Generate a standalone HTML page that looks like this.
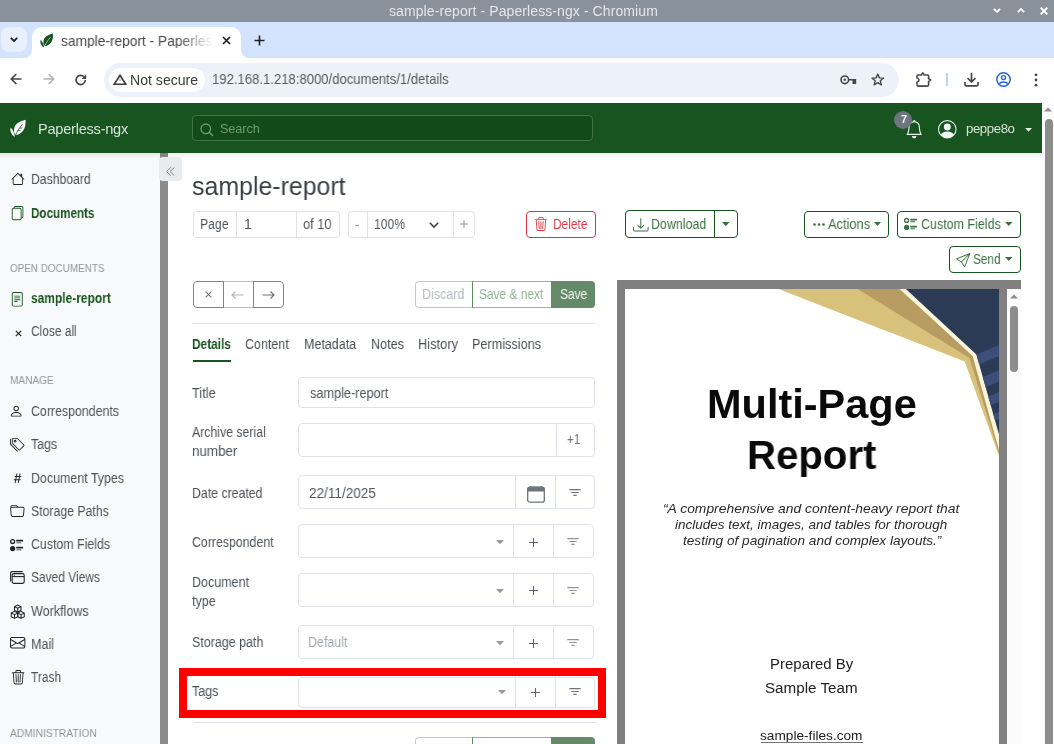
<!DOCTYPE html>
<html><head><meta charset="utf-8">
<style>
*{box-sizing:border-box;margin:0;padding:0}
html,body{width:1054px;height:744px;overflow:hidden;background:#fff;font-family:"Liberation Sans",sans-serif;-webkit-font-smoothing:antialiased;}
.a{position:absolute;}
.t{position:absolute;white-space:nowrap;line-height:1;will-change:transform;}
svg{position:absolute;overflow:visible}
</style></head><body>
<!-- title bar -->
<div class="a" style="left:0;top:0;width:1054px;height:22px;background:#89929b"></div>
<div class="t" style="left:389px;top:4px;font-size:14px;color:#e3e6ea;letter-spacing:0.09px">sample-report - Paperless-ngx - Chromium</div>

<!-- tab strip -->
<div class="a" style="left:0;top:22px;width:1054px;height:36px;background:#d3e3fd"></div>
<!-- toolbar -->
<div class="a" style="left:0;top:58px;width:1054px;height:45px;background:#fff"></div>
<div class="a" style="left:104px;top:63px;width:795px;height:34px;border-radius:17px;background:#edf2fa"></div>


<!-- window controls -->
<svg style="left:993px;top:8px" width="8" height="5" viewBox="0 0 8 5"><path d="M0.8 0.8 L4 4 L7.2 0.8" fill="none" stroke="#fff" stroke-width="1.8"/></svg>
<svg style="left:1017px;top:8px" width="8" height="5" viewBox="0 0 8 5"><path d="M0.8 4.2 L4 1 L7.2 4.2" fill="none" stroke="#fff" stroke-width="1.8"/></svg>
<svg style="left:1040px;top:6.5px" width="8" height="8" viewBox="0 0 8 8"><path d="M0.7 0.7 L7.3 7.3 M7.3 0.7 L0.7 7.3" fill="none" stroke="#fff" stroke-width="1.9"/></svg>

<!-- tab dropdown -->
<div class="a" style="left:1px;top:27px;width:26px;height:25px;border-radius:8px;background:#e9f0fd"></div>
<svg style="left:10px;top:37px" width="8" height="5" viewBox="0 0 8 5"><path d="M0.8 0.8 L4 4 L7.2 0.8" fill="none" stroke="#1f1f1f" stroke-width="1.8"/></svg>
<!-- active tab -->
<div class="a" style="left:32px;top:27px;width:209px;height:31px;border-radius:10px 10px 0 0;background:#fff"></div>
<svg style="left:24px;top:50px" width="8" height="8" viewBox="0 0 8 8"><path d="M8 0 L8 8 L0 8 A8 8 0 0 0 8 0 Z" fill="#fff"/></svg>
<svg style="left:241px;top:50px" width="8" height="8" viewBox="0 0 8 8"><path d="M0 0 L0 8 L8 8 A8 8 0 0 1 0 0 Z" fill="#fff"/></svg>
<svg style="left:40px;top:32.5px" width="13.5" height="15" viewBox="0 0 16 18"><path d="M15.5 0.5 C9 2 4.5 5 4 10 C3.8 12.5 4.5 14.5 5.5 16 C11 15 14.5 11 15.3 6 C15.6 4 15.6 2 15.5 0.5 Z" fill="#17541f"/><path d="M0.6 8.2 C-0.3 11.5 1 15 4.8 17.8 C4.5 14.3 3.2 10.8 0.6 8.2 Z" fill="#17541f"/><path d="M5.5 16 C7 12 9.5 8.5 12.5 5" fill="none" stroke="#fff" stroke-width="0.7"/></svg>
<div class="t" style="left:61px;top:33.8px;font-size:14.4px;color:#474747;width:159px;overflow:hidden;transform:scaleX(0.955);transform-origin:0 0;-webkit-mask-image:linear-gradient(90deg,#000 78%,transparent 100%)">sample-report - Paperless-ngx</div>
<svg style="left:222px;top:36px" width="9" height="9" viewBox="0 0 9 9"><path d="M1 1 L8 8 M8 1 L1 8" fill="none" stroke="#1f1f1f" stroke-width="1.7"/></svg>
<svg style="left:253.5px;top:34.5px" width="11" height="11" viewBox="0 0 11 11"><path d="M5.5 0.5 V10.5 M0.5 5.5 H10.5" fill="none" stroke="#1f1f1f" stroke-width="1.6"/></svg>

<!-- toolbar icons -->
<svg style="left:10px;top:73px" width="12" height="12" viewBox="0 0 12 12"><path d="M11.5 6 H1.5 M6.3 1 L1.3 6 L6.3 11" fill="none" stroke="#474747" stroke-width="1.7"/></svg>
<svg style="left:42.5px;top:73px" width="12" height="12" viewBox="0 0 12 12"><path d="M0.5 6 H10.5 M5.7 1 L10.7 6 L5.7 11" fill="none" stroke="#b3b3b3" stroke-width="1.7"/></svg>
<svg style="left:75px;top:73.5px" width="12" height="12" viewBox="0 0 12 12"><path d="M10.3 6 A4.6 4.6 0 1 1 8.9 2.6" fill="none" stroke="#474747" stroke-width="1.7"/><path d="M11.2 0.3 V5 H6.5 Z" fill="#474747"/></svg>
<div class="a" style="left:108.5px;top:68px;width:96.5px;height:24px;border-radius:12px;background:#fff"></div>
<svg style="left:112.5px;top:74px" width="14" height="11" viewBox="0 0 14 11"><path d="M7 1.2 L12.8 10.2 H1.2 Z" fill="none" stroke="#3c3c3c" stroke-width="1.6" stroke-linejoin="miter"/><path d="M7 4.5 V7.3" stroke="#888" stroke-width="0.8"/></svg>
<div class="t" style="left:129.5px;top:72.5px;font-size:14.1px;color:#3a3a3a">Not secure</div>
<div class="t" style="left:212.3px;top:73.1px;font-size:13.9px;color:#5a5a5a;transform:scaleX(0.943);transform-origin:0 0">192.168.1.218:8000/documents/1/details</div>
<!-- key -->
<svg style="left:840px;top:74.5px" width="17" height="10" viewBox="0 0 17 10"><circle cx="4.8" cy="4.8" r="3.8" fill="none" stroke="#474747" stroke-width="1.6"/><circle cx="4.8" cy="4.8" r="1.2" fill="#474747"/><path d="M8.6 3.9 H16.2 V9 H12.5 V5.6 H8.6 Z" fill="#474747"/></svg>
<!-- star -->
<svg style="left:870.5px;top:72.5px" width="13.5" height="13" viewBox="0 0 16 16"><path d="M8 1.3 L10 6 L15 6.4 L11.2 9.6 L12.4 14.6 L8 11.9 L3.6 14.6 L4.8 9.6 L1 6.4 L6 6 Z" fill="none" stroke="#474747" stroke-width="1.7" stroke-linejoin="round"/></svg>
<!-- extension -->
<svg style="left:915.5px;top:71.5px" width="16" height="15" viewBox="0 0 16 15"><path d="M2 3 H5.3 L6.8 0.9 L8.3 3 H11.6 Q12.6 3 12.6 4 V6.7 L14.6 8 L12.6 9.3 V13.1 Q12.6 14.1 11.6 14.1 H2 Q1 14.1 1 13.1 V10.2 Q3 9.6 3 8 Q3 6.4 1 5.8 V4 Q1 3 2 3 Z" fill="none" stroke="#474747" stroke-width="1.6" stroke-linejoin="round"/></svg>
<div class="a" style="left:946px;top:73px;width:1.5px;height:13px;background:#c2d3f0"></div>
<!-- download -->
<svg style="left:963.5px;top:71.5px" width="15" height="15" viewBox="0 0 15 15"><path d="M7.5 0.8 V10 M3.6 6.2 L7.5 10.1 L11.4 6.2 M1 10 V12.6 Q1 13.8 2.2 13.8 H12.8 Q14 13.8 14 12.6 V10" fill="none" stroke="#474747" stroke-width="1.7"/></svg>
<!-- profile -->
<svg style="left:995.5px;top:71.8px" width="15" height="15" viewBox="0 0 15 15"><circle cx="7.5" cy="7.5" r="6.7" fill="none" stroke="#2266d8" stroke-width="1.5"/><circle cx="7.5" cy="5.6" r="2" fill="none" stroke="#2266d8" stroke-width="1.4"/><path d="M3.2 11.9 C4.5 9.4 10.5 9.4 11.8 11.9" fill="none" stroke="#2266d8" stroke-width="1.4"/></svg>
<!-- menu -->
<svg style="left:1034px;top:72.5px" width="4" height="14" viewBox="0 0 4 14"><circle cx="2" cy="1.8" r="1.4" fill="#474747"/><circle cx="2" cy="7" r="1.4" fill="#474747"/><circle cx="2" cy="12.2" r="1.4" fill="#474747"/></svg>

<!-- navbar -->
<div class="a" style="left:0;top:103px;width:1042px;height:50px;background:#17541f"></div>
<div class="a" style="left:192px;top:115px;width:401px;height:26px;border-radius:4px;background:#134a1a;border:1px solid #457349"></div>


<svg style="left:9.5px;top:119px" width="16" height="18.5" viewBox="0 0 16 18"><path d="M15.5 0.5 C9 2 4.5 5 4 10 C3.8 12.5 4.5 14.5 5.5 16 C11 15 14.5 11 15.3 6 C15.6 4 15.6 2 15.5 0.5 Z" fill="#fff"/><path d="M0.6 8.2 C-0.3 11.5 1 15 4.8 17.8 C4.5 14.3 3.2 10.8 0.6 8.2 Z" fill="#fff"/><path d="M5.5 16 C7 12 9.5 8.5 12.5 5 M8 11.5 L10.5 11.3 M9.8 9 L12.5 8.6" fill="none" stroke="#17541f" stroke-width="0.8"/></svg>
<div class="t" style="left:38.2px;top:121.5px;font-size:14.6px;color:#d7e2d8;letter-spacing:-0.25px">Paperless-ngx</div>
<svg style="left:200px;top:122.5px" width="14" height="14" viewBox="0 0 14 14"><circle cx="5.8" cy="5.8" r="4.8" fill="none" stroke="#6f9a74" stroke-width="1.3"/><path d="M9.2 9.2 L13 13" stroke="#6f9a74" stroke-width="1.4"/></svg>
<div class="t" style="left:220.3px;top:123px;font-size:12.7px;color:#6f9a74;letter-spacing:-0.1px">Search</div>
<!-- badge+bell -->
<svg style="left:905.4px;top:120px" width="18.4" height="18.4" viewBox="0 0 16 16"><path d="M8 16a2 2 0 0 0 2-2H6a2 2 0 0 0 2 2M8 1.918l-.797.161A4 4 0 0 0 4 6c0 .628-.134 2.197-.459 3.742-.16.767-.376 1.566-.663 2.258h10.244c-.287-.692-.502-1.49-.663-2.258C12.134 8.197 12 6.628 12 6a4 4 0 0 0-3.203-3.92zM14.22 12c.223.447.481.801.78 1H1c.299-.199.557-.553.78-1C2.68 10.2 3 6.88 3 6c0-2.42 1.72-4.44 4.005-4.901a1 1 0 1 1 1.99 0A5 5 0 0 1 13 6c0 .88.32 4.2 1.22 6" fill="#e6ede6"/></svg>
<div class="a" style="left:894.2px;top:110.7px;width:18.2px;height:18.2px;border-radius:50%;background:#6c757d"></div>
<div class="t" style="left:894.5px;top:114.2px;width:18px;text-align:center;font-size:11px;font-weight:bold;color:#f4f4f4">7</div>
<svg style="left:938.3px;top:120px" width="18.6" height="18.6" viewBox="0 0 16 16"><path d="M11 6a3 3 0 1 1-6 0 3 3 0 0 1 6 0" fill="#f0f4f0"/><path fill-rule="evenodd" d="M0 8a8 8 0 1 1 16 0A8 8 0 0 1 0 8m8-7a7 7 0 0 0-5.468 11.37C3.242 11.226 4.805 10 8 10s4.757 1.225 5.468 2.37A7 7 0 0 0 8 1" fill="#f0f4f0"/></svg>
<div class="t" style="left:966px;top:121.5px;font-size:13.2px;color:#d7e2d8;letter-spacing:-0.4px">peppe8o</div>
<svg style="left:1024.5px;top:127.5px" width="7" height="4" viewBox="0 0 7 4"><path d="M0 0 H7 L3.5 3.8 Z" fill="#e6ede6"/></svg>

<!-- page scrollbar -->
<div class="a" style="left:1042px;top:103px;width:12px;height:641px;background:#fcfcfc"></div>
<div class="a" style="left:1045px;top:119px;width:8px;height:640px;border-radius:4px;background:#8c8c8c"></div>

<!-- scrollbar up arrow -->
<svg style="left:1044px;top:107px" width="8" height="5" viewBox="0 0 8 5"><path d="M0 4.5 L4 0.5 L8 4.5 Z" fill="#8c8c8c"/></svg>


<div class="a" style="left:0px;top:153px;width:160px;height:591px;background:#f8f9fa;"></div>
<div class="a" style="left:160px;top:153px;width:8px;height:591px;background:#8b8b8b;"></div>
<div class="a" style="left:0px;top:153px;width:1042px;height:6px;background:transparent;background:linear-gradient(rgba(0,0,0,0.07),rgba(0,0,0,0))"></div>
<div class="a" style="left:159px;top:157px;width:23px;height:24px;background:#e9ecef;border-radius:4px"></div>
<svg style="left:166.2px;top:167px" width="9" height="9" viewBox="0 0 9 9"><path d="M4.8 0.4 L0.6 4.5 L4.8 8.6 M8.4 0.4 L4.2 4.5 L8.4 8.6" fill="none" stroke="#6c757d" stroke-width="0.9"/></svg>
<div class="t" style="left:31.30px;top:171.80px;font-size:14px;color:#4d5257;transform:scaleX(0.8706);transform-origin:0 0;">Dashboard</div>
<div class="t" style="left:31.30px;top:205.50px;font-size:14px;color:#17541f;font-weight:bold;transform:scaleX(0.8317);transform-origin:0 0;">Documents</div>
<div class="t" style="left:31.30px;top:291.00px;font-size:14px;color:#17541f;font-weight:bold;transform:scaleX(0.8546);transform-origin:0 0;">sample-report</div>
<div class="t" style="left:31.30px;top:324.30px;font-size:14px;color:#4d5257;transform:scaleX(0.8512);transform-origin:0 0;">Close all</div>
<div class="t" style="left:31.30px;top:404.20px;font-size:14px;color:#4d5257;transform:scaleX(0.8834);transform-origin:0 0;">Correspondents</div>
<div class="t" style="left:31.30px;top:436.80px;font-size:14px;color:#4d5257;transform:scaleX(0.8835);transform-origin:0 0;">Tags</div>
<div class="t" style="left:31.30px;top:470.50px;font-size:14px;color:#4d5257;transform:scaleX(0.8875);transform-origin:0 0;">Document Types</div>
<div class="t" style="left:31.30px;top:503.70px;font-size:14px;color:#4d5257;transform:scaleX(0.8765);transform-origin:0 0;">Storage Paths</div>
<div class="t" style="left:31.30px;top:536.90px;font-size:14px;color:#4d5257;transform:scaleX(0.8831);transform-origin:0 0;">Custom Fields</div>
<div class="t" style="left:31.30px;top:570.10px;font-size:14px;color:#4d5257;transform:scaleX(0.8549);transform-origin:0 0;">Saved Views</div>
<div class="t" style="left:31.30px;top:603.60px;font-size:14px;color:#4d5257;transform:scaleX(0.8969);transform-origin:0 0;">Workflows</div>
<div class="t" style="left:31.30px;top:637.10px;font-size:14px;color:#4d5257;transform:scaleX(0.8953);transform-origin:0 0;">Mail</div>
<div class="t" style="left:31.30px;top:669.80px;font-size:14px;color:#4d5257;transform:scaleX(0.8532);transform-origin:0 0;">Trash</div>
<div class="t" style="left:9.80px;top:263.29px;font-size:10.6px;color:#8f959b;transform:scaleX(0.9330);transform-origin:0 0;">OPEN DOCUMENTS</div>
<div class="t" style="left:10.20px;top:375.19px;font-size:10.6px;color:#8f959b;transform:scaleX(0.9532);transform-origin:0 0;">MANAGE</div>
<div class="t" style="left:9.70px;top:728.39px;font-size:10.6px;color:#8f959b;transform:scaleX(0.9668);transform-origin:0 0;">ADMINISTRATION</div>
<svg style="left:10.7px;top:171.9px" width="13.76" height="13.76" viewBox="0 0 16 16"><path d="M8.707 1.5a1 1 0 0 0-1.414 0L.646 8.146a.5.5 0 0 0 .708.708L2 8.207V13.5A1.5 1.5 0 0 0 3.5 15h9a1.5 1.5 0 0 0 1.5-1.5V8.207l.646.647a.5.5 0 0 0 .708-.708L13 5.793V2.5a.5.5 0 0 0-.5-.5h-1a.5.5 0 0 0-.5.5v1.293zM13 7.207V13.5a.5.5 0 0 1-.5.5h-9a.5.5 0 0 1-.5-.5V7.207l5-5z" fill="#212529"/></svg>
<svg style="left:10.3px;top:205.7px" width="14.24" height="14.24" viewBox="0 0 16 16"><path d="M13 0H6a2 2 0 0 0-2 2 2 2 0 0 0-2 2v10a2 2 0 0 0 2 2h7a2 2 0 0 0 2-2 2 2 0 0 0 2-2V2a2 2 0 0 0-2-2m0 13V4a2 2 0 0 0-2-2H5a1 1 0 0 1 1-1h7a1 1 0 0 1 1 1v10a1 1 0 0 1-1 1M3 4a1 1 0 0 1 1-1h7a1 1 0 0 1 1 1v10a1 1 0 0 1-1 1H4a1 1 0 0 1-1-1z" fill="#17541f"/></svg>
<svg style="left:9.7px;top:292px" width="14.56" height="14.56" viewBox="0 0 16 16"><path d="M5 4a.5.5 0 0 0 0 1h6a.5.5 0 0 0 0-1zm-.5 2.5A.5.5 0 0 1 5 6h6a.5.5 0 0 1 0 1H5a.5.5 0 0 1-.5-.5M5 8a.5.5 0 0 0 0 1h6a.5.5 0 0 0 0-1zm0 2a.5.5 0 0 0 0 1h3a.5.5 0 0 0 0-1zM2 2a2 2 0 0 1 2-2h8a2 2 0 0 1 2 2v12a2 2 0 0 1-2 2H4a2 2 0 0 1-2-2zm10-1H4a1 1 0 0 0-1 1v12a1 1 0 0 0 1 1h8a1 1 0 0 0 1-1V2a1 1 0 0 0-1-1" fill="#17541f"/></svg>
<svg style="left:14.5px;top:329.5px" width="7" height="7" viewBox="0 0 7 7"><path d="M0.8 0.8 L6.2 6.2 M6.2 0.8 L0.8 6.2" stroke="#212529" stroke-width="1.2"/></svg>
<svg style="left:9.2px;top:403.9px" width="14.4" height="14.4" viewBox="0 0 16 16"><path d="M8 8a3 3 0 1 0 0-6 3 3 0 0 0 0 6m2-3a2 2 0 1 1-4 0 2 2 0 0 1 4 0m4 8c0 1-1 1-1 1H3s-1 0-1-1 1-4 6-4 6 3 6 4m-1-.004c-.001-.246-.154-.986-.832-1.664C11.516 10.68 10.289 10 8 10s-3.516.68-4.168 1.332c-.678.678-.83 1.418-.832 1.664z" fill="#212529"/></svg>
<svg style="left:10px;top:437px" width="14.88" height="14.88" viewBox="0 0 16 16"><path d="M3 2v4.586l7 7L14.586 9l-7-7zM2 2a1 1 0 0 1 1-1h4.586a1 1 0 0 1 .707.293l7 7a1 1 0 0 1 0 1.414l-4.586 4.586a1 1 0 0 1-1.414 0l-7-7A1 1 0 0 1 2 6.586zM5.5 5a.5.5 0 1 1 0-1 .5.5 0 0 1 0 1m0 1a1.5 1.5 0 1 0 0-3 1.5 1.5 0 0 0 0 3M1 7.086a1 1 0 0 0 .293.707L8.75 15.25l-.043.043a1 1 0 0 1-1.414 0l-7-7A1 1 0 0 1 0 7.586V3a1 1 0 0 1 1-1z" fill="#212529"/></svg>
<svg style="left:9.8px;top:470.5px" width="14.72" height="14.72" viewBox="0 0 16 16"><path d="M8.39 12.648a1 1 0 0 0-.015.18c0 .305.21.508.5.508.266 0 .492-.172.555-.477l.554-2.703h1.204c.421 0 .617-.234.617-.547 0-.312-.188-.53-.617-.53h-.985l.516-2.524h1.265c.43 0 .618-.227.618-.547 0-.313-.188-.524-.618-.524h-1.046l.476-2.304a1 1 0 0 0 .016-.164.51.51 0 0 0-.516-.516.54.54 0 0 0-.539.43l-.523 2.554H7.617l.477-2.304c.008-.04.015-.118.015-.164a.51.51 0 0 0-.523-.516.54.54 0 0 0-.531.43L6.53 5.484H5.414c-.43 0-.617.22-.617.532s.187.539.617.539h.906l-.515 2.523H4.609c-.421 0-.609.219-.609.531s.188.547.61.547h.976l-.516 2.492c-.008.04-.015.125-.015.18 0 .305.21.508.5.508.265 0 .492-.172.554-.477l.555-2.703h2.242zm-1-6.109h2.266l-.515 2.563H6.859l.532-2.563z" fill="#212529"/></svg>
<svg style="left:10.2px;top:503.6px" width="14.72" height="14.72" viewBox="0 0 16 16"><path d="M.54 3.87.5 3a2 2 0 0 1 2-2h3.672a2 2 0 0 1 1.414.586l.828.828A2 2 0 0 0 9.828 3h3.982a2 2 0 0 1 1.992 2.181l-.637 7A2 2 0 0 1 13.174 14H2.826a2 2 0 0 1-1.991-1.819l-.637-7a2 2 0 0 1 .342-1.31zM2.19 4a1 1 0 0 0-.996 1.09l.637 7a1 1 0 0 0 .995.91h10.348a1 1 0 0 0 .995-.91l.637-7A1 1 0 0 0 13.81 4zm4.69-1.707A1 1 0 0 0 6.172 2H2.5a1 1 0 0 0-1 .981l.006.139q.323-.119.684-.12h5.396z" fill="#212529"/></svg>
<svg style="left:10.1px;top:537.5px" width="14.08" height="14.08" viewBox="0 0 16 16"><path d="M7 2.5a.5.5 0 0 1 .5-.5h7a.5.5 0 0 1 .5.5v1a.5.5 0 0 1-.5.5h-7a.5.5 0 0 1-.5-.5zM0 12a3 3 0 1 1 6 0 3 3 0 0 1-6 0m7-1.5a.5.5 0 0 1 .5-.5h7a.5.5 0 0 1 .5.5v1a.5.5 0 0 1-.5.5h-7a.5.5 0 0 1-.5-.5zm0-5a.5.5 0 0 1 .5-.5h5a.5.5 0 0 1 0 1h-5a.5.5 0 0 1-.5-.5m0 8a.5.5 0 0 1 .5-.5h5a.5.5 0 0 1 0 1h-5a.5.5 0 0 1-.5-.5M3 1a3 3 0 1 0 0 6 3 3 0 0 0 0-6m0 4.5a1.5 1.5 0 1 1 0-3 1.5 1.5 0 0 1 0 3" fill="#212529"/></svg>
<svg style="left:10px;top:571px" width="15" height="13" viewBox="0 0 15 13"><rect x="2.2" y="2.6" width="12" height="9.8" rx="1.6" fill="none" stroke="#212529" stroke-width="1.1"/><path d="M2.2 5.6 H14.2" stroke="#212529" stroke-width="1.1"/><path d="M0.6 10.6 V2.2 Q0.6 0.6 2.2 0.6 H12.6" fill="none" stroke="#212529" stroke-width="1.1"/><path d="M3.8 4.1 H5" stroke="#212529" stroke-width="0.9"/></svg>
<svg style="left:10px;top:603.5px" width="15.5" height="15.5" viewBox="0 0 15.5 15.5"><g fill="none" stroke="#212529" stroke-width="1.05" stroke-linejoin="round"><path d="M7.75 1 L11 2.6 V6.4 L7.75 8 L4.5 6.4 V2.6 Z M4.5 2.6 L7.75 4.2 L11 2.6 M7.75 4.2 V8"/><path d="M4.5 7.4 L7.75 9 V12.8 L4.5 14.4 L1.25 12.8 V9 Z M1.25 9 L4.5 10.6 L7.75 9 M4.5 10.6 V14.4"/><path d="M11 7.4 L14.25 9 V12.8 L11 14.4 L7.75 12.8 V9 Z M7.75 9 L11 10.6 L14.25 9 M11 10.6 V14.4"/></g></svg>
<svg style="left:9.9px;top:635px" width="15.36" height="15.36" viewBox="0 0 16 16"><path d="M0 4a2 2 0 0 1 2-2h12a2 2 0 0 1 2 2v8a2 2 0 0 1-2 2H2a2 2 0 0 1-2-2zm2-1a1 1 0 0 0-1 1v.217l7 4.2 7-4.2V4a1 1 0 0 0-1-1zm13 2.383-4.708 2.825L15 11.105zm-.034 6.876-5.64-3.471L8 9.583l-1.326-.795-5.64 3.47A1 1 0 0 0 2 13h12a1 1 0 0 0 .966-.741M1 11.105l4.708-2.897L1 5.383z" fill="#212529"/></svg>
<svg style="left:11.3px;top:669.6px" width="14.4" height="14.4" viewBox="0 0 16 16"><path d="M6.5 1h3a.5.5 0 0 1 .5.5v1H6v-1a.5.5 0 0 1 .5-.5M11 2.5v-1A1.5 1.5 0 0 0 9.5 0h-3A1.5 1.5 0 0 0 5 1.5v1H1.5a.5.5 0 0 0 0 1h.538l.853 10.66A2 2 0 0 0 4.885 16h6.23a2 2 0 0 0 1.994-1.84l.853-10.66h.538a.5.5 0 0 0 0-1zm1.958 1-.846 10.58a1 1 0 0 1-.997.92h-6.23a1 1 0 0 1-.997-.92L3.042 3.5zm-7.487 1a.5.5 0 0 1 .528.47l.5 8.5a.5.5 0 0 1-.998.06L5 5.03a.5.5 0 0 1 .47-.53Zm5.058 0a.5.5 0 0 1 .47.53l-.5 8.5a.5.5 0 1 1-.998-.06l.5-8.5a.5.5 0 0 1 .528-.47M8 4.5a.5.5 0 0 1 .5.5v8.5a.5.5 0 0 1-1 0V5a.5.5 0 0 1 .5-.5" fill="#212529"/></svg>
<div class="a" style="left:617px;top:280px;width:404px;height:464px;background:#808080;"></div>
<div class="a" style="left:625px;top:289px;width:374px;height:455px;background:#fff;"></div>
<div class="a" style="left:1007px;top:289px;width:14px;height:455px;background:#fbfbfb;"></div>
<div class="a" style="left:1010px;top:306px;width:8px;height:66px;background:#8c8c8c;border-radius:4px"></div>
<svg style="left:1010px;top:293.5px" width="8" height="5" viewBox="0 0 8 5"><path d="M0 4.5 L4 0.5 L8 4.5 Z" fill="#8c8c8c"/></svg>
<svg style="left:0;top:0" width="1054" height="744" viewBox="0 0 1054 744">
<defs><clipPath id="nv"><polygon points="905.9,289 999,289 999,434.5 976.4,354.5"/></clipPath></defs>
<polygon points="778.5,289 999,289 999,456 964.7,361.4" fill="#d8c17a"/>
<polygon points="857.5,289 999,289 999,453.5 969.5,358" fill="#b89d62"/>
<polygon points="899.5,289 999,289 999,450 972.6,356" fill="#f9f4da"/>
<polygon points="905.9,289 999,289 999,434.5 976.4,354.5" fill="#2b3a55"/>
<g clip-path="url(#nv)" fill="#3c4f78">
<polygon points="999,344.9 999,356 940,381.4 940,370.3"/>
<polygon points="999,370.2 999,381.6 940,407 940,395.6"/>
<polygon points="999,392 999,401.7 940,427.1 940,417.4"/>
<polygon points="999,412 999,419 940,444.4 940,437.4"/>
</g>
</svg>
<div class="t" style="left:706.70px;top:384.40px;font-size:40.7px;color:#0a0a0a;font-weight:bold;transform:scaleX(1.0197);transform-origin:0 0;">Multi-Page</div>
<div class="t" style="left:747.00px;top:434.80px;font-size:40.7px;color:#0a0a0a;font-weight:bold;transform:scaleX(0.9874);transform-origin:0 0;">Report</div>
<div class="t" style="left:663.30px;top:501.95px;font-size:13px;color:#2a2a2a;font-style:italic;transform:scaleX(1.0669);transform-origin:0 0;">“A comprehensive and content-heavy report that</div>
<div class="t" style="left:675.30px;top:518.35px;font-size:13px;color:#2a2a2a;font-style:italic;transform:scaleX(1.0380);transform-origin:0 0;">includes text, images, and tables for thorough</div>
<div class="t" style="left:682.70px;top:534.15px;font-size:13px;color:#2a2a2a;font-style:italic;transform:scaleX(1.0486);transform-origin:0 0;">testing of pagination and complex layouts.”</div>
<div class="t" style="left:769.90px;top:657.00px;font-size:14.7px;color:#222;transform:scaleX(1.0204);transform-origin:0 0;">Prepared By</div>
<div class="t" style="left:765.20px;top:681.21px;font-size:14.7px;color:#222;transform:scaleX(1.0335);transform-origin:0 0;">Sample Team</div>
<div class="t" style="left:759.90px;top:730.09px;font-size:12.6px;color:#222;transform:scaleX(1.0847);transform-origin:0 0;">sample-files.com</div>
<div class="a" style="left:760.6px;top:742px;width:102.5px;height:1px;background:#777;"></div>
<div class="t" style="left:192.00px;top:174.05px;font-size:25px;color:#3a3f44;transform:scaleX(0.9958);transform-origin:0 0;">sample-report</div>
<div class="a" style="left:193px;top:211px;width:147px;height:27px;border:1px solid #dee2e6;border-radius:4px"></div>
<div class="a" style="left:236px;top:211px;width:1px;height:27px;background:#dee2e6;"></div>
<div class="a" style="left:296px;top:211px;width:1px;height:27px;background:#dee2e6;"></div>
<div class="t" style="left:199.60px;top:216.80px;font-size:14px;color:#50565b;transform:scaleX(0.8749);transform-origin:0 0;">Page</div>
<div class="t" style="left:243.80px;top:216.80px;font-size:14px;color:#50565b;">1</div>
<div class="t" style="left:303.30px;top:216.80px;font-size:14px;color:#50565b;transform:scaleX(0.9181);transform-origin:0 0;">of 10</div>
<div class="a" style="left:347.5px;top:210.5px;width:127.5px;height:27.5px;border:1px solid #dee2e6;border-radius:4px"></div>
<div class="a" style="left:366.5px;top:211px;width:1px;height:27px;background:#dee2e6;"></div>
<div class="a" style="left:452.5px;top:211px;width:1px;height:27px;background:#dee2e6;"></div>
<div class="a" style="left:354.5px;top:224.5px;width:4px;height:1px;background:#9aa0a6;"></div>
<div class="t" style="left:374.10px;top:216.60px;font-size:14px;color:#50565b;transform:scaleX(0.8705);transform-origin:0 0;">100%</div>
<svg style="left:429px;top:222px" width="10" height="6" viewBox="0 0 10 6"><path d="M0.8 0.8 L5 5 L9.2 0.8" fill="none" stroke="#3d4246" stroke-width="1.6"/></svg>
<svg style="left:459.5px;top:219.5px" width="8" height="8" viewBox="0 0 8 8"><path d="M4 0 V8 M0 4 H8" stroke="#8a9096" stroke-width="1"/></svg>
<div class="a" style="left:526px;top:210.5px;width:70px;height:27.5px;border:1px solid #dc3545;border-radius:4px"></div>
<svg style="left:534.4px;top:217.3px" width="13.92" height="13.92" viewBox="0 0 16 16"><path d="M6.5 1h3a.5.5 0 0 1 .5.5v1H6v-1a.5.5 0 0 1 .5-.5M11 2.5v-1A1.5 1.5 0 0 0 9.5 0h-3A1.5 1.5 0 0 0 5 1.5v1H1.5a.5.5 0 0 0 0 1h.538l.853 10.66A2 2 0 0 0 4.885 16h6.23a2 2 0 0 0 1.994-1.84l.853-10.66h.538a.5.5 0 0 0 0-1zm1.958 1-.846 10.58a1 1 0 0 1-.997.92h-6.23a1 1 0 0 1-.997-.92L3.042 3.5zm-7.487 1a.5.5 0 0 1 .528.47l.5 8.5a.5.5 0 0 1-.998.06L5 5.03a.5.5 0 0 1 .47-.53Zm5.058 0a.5.5 0 0 1 .47.53l-.5 8.5a.5.5 0 1 1-.998-.06l.5-8.5a.5.5 0 0 1 .528-.47M8 4.5a.5.5 0 0 1 .5.5v8.5a.5.5 0 0 1-1 0V5a.5.5 0 0 1 .5-.5" fill="#dc3545"/></svg>
<div class="t" style="left:552.50px;top:216.90px;font-size:14px;color:#dc3545;transform:scaleX(0.8502);transform-origin:0 0;">Delete</div>
<div class="a" style="left:625px;top:210px;width:113px;height:28px;border:1px solid #17541f;border-radius:4px"></div>
<div class="a" style="left:714px;top:210px;width:1px;height:28px;background:#17541f;"></div>
<svg style="left:633px;top:217.1px" width="15.6" height="15.6" viewBox="0 0 16 16"><path d="M.5 9.9a.5.5 0 0 1 .5.5v2.5a1 1 0 0 0 1 1h12a1 1 0 0 0 1-1v-2.5a.5.5 0 0 1 1 0v2.5a2 2 0 0 1-2 2H2a2 2 0 0 1-2-2v-2.5a.5.5 0 0 1 .5-.5M7.646 11.854a.5.5 0 0 0 .708 0l3-3a.5.5 0 0 0-.708-.708L8.5 10.293V1.5a.5.5 0 0 0-1 0v8.793L5.354 8.146a.5.5 0 1 0-.708.708z" fill="#3a7041"/></svg>
<div class="t" style="left:651.30px;top:217.00px;font-size:14px;color:#3a7041;transform:scaleX(0.8870);transform-origin:0 0;">Download</div>
<svg style="left:722px;top:222px" width="7.5" height="4.5" viewBox="0 0 7.5 4.5"><path d="M0 0 H7.5 L3.75 4.3 Z" fill="#3a7041"/></svg>
<div class="a" style="left:803.5px;top:210.5px;width:85px;height:27.5px;border:1px solid #17541f;border-radius:4px"></div>
<svg style="left:812.5px;top:223px" width="12" height="3" viewBox="0 0 12 3"><circle cx="1.5" cy="1.5" r="1.3" fill="#3a7041"/><circle cx="6" cy="1.5" r="1.3" fill="#3a7041"/><circle cx="10.5" cy="1.5" r="1.3" fill="#3a7041"/></svg>
<div class="t" style="left:828.20px;top:217.00px;font-size:14px;color:#3a7041;transform:scaleX(0.9190);transform-origin:0 0;">Actions</div>
<svg style="left:874px;top:222px" width="7" height="4.3" viewBox="0 0 7 4.3"><path d="M0 0 H7 L3.5 4 Z" fill="#3a7041"/></svg>
<div class="a" style="left:896.5px;top:210.5px;width:124px;height:27.5px;border:1px solid #17541f;border-radius:4px"></div>
<svg style="left:904px;top:216.5px" width="13.92" height="13.92" viewBox="0 0 16 16"><path d="M7 2.5a.5.5 0 0 1 .5-.5h7a.5.5 0 0 1 .5.5v1a.5.5 0 0 1-.5.5h-7a.5.5 0 0 1-.5-.5zM0 12a3 3 0 1 1 6 0 3 3 0 0 1-6 0m7-1.5a.5.5 0 0 1 .5-.5h7a.5.5 0 0 1 .5.5v1a.5.5 0 0 1-.5.5h-7a.5.5 0 0 1-.5-.5zm0-5a.5.5 0 0 1 .5-.5h5a.5.5 0 0 1 0 1h-5a.5.5 0 0 1-.5-.5m0 8a.5.5 0 0 1 .5-.5h5a.5.5 0 0 1 0 1h-5a.5.5 0 0 1-.5-.5M3 1a3 3 0 1 0 0 6 3 3 0 0 0 0-6m0 4.5a1.5 1.5 0 1 1 0-3 1.5 1.5 0 0 1 0 3" fill="#3a7041"/></svg>
<div class="t" style="left:921.30px;top:217.00px;font-size:14px;color:#3a7041;transform:scaleX(0.8920);transform-origin:0 0;">Custom Fields</div>
<svg style="left:1005px;top:222px" width="7.5" height="4.3" viewBox="0 0 7.5 4.3"><path d="M0 0 H7.5 L3.75 4 Z" fill="#3a7041"/></svg>
<div class="a" style="left:948.5px;top:245.5px;width:72px;height:27.5px;border:1px solid #17541f;border-radius:4px"></div>
<svg style="left:956.3px;top:252.6px" width="14.4" height="14.4" viewBox="0 0 16 16"><path d="M15.854.146a.5.5 0 0 1 .11.54l-5.819 14.547a.75.75 0 0 1-1.329.124l-3.178-4.995L.643 7.184a.75.75 0 0 1 .124-1.33L15.314.037a.5.5 0 0 1 .54.11ZM6.636 10.07l2.761 4.338L14.13 2.576zm6.787-8.201L1.591 6.602l4.339 2.76z" fill="#3a7041"/></svg>
<div class="t" style="left:973.30px;top:252.00px;font-size:14px;color:#3a7041;transform:scaleX(0.8443);transform-origin:0 0;">Send</div>
<svg style="left:1005px;top:257px" width="7.5" height="4.3" viewBox="0 0 7.5 4.3"><path d="M0 0 H7.5 L3.75 4 Z" fill="#3a7041"/></svg>
<div class="a" style="left:192.5px;top:280.5px;width:91.5px;height:27.5px;border:1px solid #7d848a;border-radius:4px"></div>
<div class="a" style="left:222.5px;top:280.5px;width:1px;height:27.5px;background:#7d848a;"></div>
<div class="a" style="left:253px;top:280.5px;width:1px;height:27.5px;background:#7d848a;"></div>
<div class="a" style="left:223.5px;top:280.5px;width:29.5px;height:1px;background:#b9bdc1;"></div>
<div class="a" style="left:223.5px;top:307px;width:29.5px;height:1px;background:#b9bdc1;"></div>
<svg style="left:204.5px;top:290.5px" width="7" height="7" viewBox="0 0 7 7"><path d="M0.6 0.6 L6.4 6.4 M6.4 0.6 L0.6 6.4" stroke="#6c757d" stroke-width="1.1"/></svg>
<svg style="left:231px;top:290.5px" width="14" height="8" viewBox="0 0 14 8"><path d="M12.5 4 H1 M4.5 0.5 L1 4 L4.5 7.5" fill="none" stroke="#b0b5ba" stroke-width="1.1"/></svg>
<svg style="left:262px;top:290.5px" width="14" height="8" viewBox="0 0 14 8"><path d="M0.5 4 H12 M8.5 0.5 L12 4 L8.5 7.5" fill="none" stroke="#6c757d" stroke-width="1.2"/></svg>
<div class="a" style="left:414.5px;top:280.5px;width:58px;height:27.5px;border:1px solid #c4c8cc;border-right:none;border-radius:4px 0 0 4px"></div>
<div class="a" style="left:472px;top:280.5px;width:80px;height:27.5px;border:1px solid #93b597;border-left:1px solid #5d8a62;"></div>
<div class="a" style="left:551px;top:280.5px;width:44px;height:27.5px;background:#658a6a;border-radius:0 4px 4px 0"></div>
<div class="t" style="left:421.80px;top:287.10px;font-size:14px;color:#b5babe;transform:scaleX(0.8913);transform-origin:0 0;">Discard</div>
<div class="t" style="left:479.30px;top:287.10px;font-size:14px;color:#8fb093;transform:scaleX(0.8521);transform-origin:0 0;">Save &amp; next</div>
<div class="t" style="left:559.90px;top:287.10px;font-size:14px;color:#f4f7f4;transform:scaleX(0.8553);transform-origin:0 0;">Save</div>
<div class="a" style="left:192px;top:323px;width:403px;height:1px;background:#dee2e6;"></div>
<div class="t" style="left:191.90px;top:336.80px;font-size:14px;color:#17541f;font-weight:bold;transform:scaleX(0.8493);transform-origin:0 0;">Details</div>
<div class="a" style="left:192.6px;top:360px;width:38.3px;height:2.4px;background:#17541f;"></div>
<div class="t" style="left:245.00px;top:336.80px;font-size:14px;color:#4a4f54;transform:scaleX(0.8906);transform-origin:0 0;">Content</div>
<div class="t" style="left:303.80px;top:336.80px;font-size:14px;color:#4a4f54;transform:scaleX(0.8931);transform-origin:0 0;">Metadata</div>
<div class="t" style="left:371.30px;top:336.80px;font-size:14px;color:#4a4f54;transform:scaleX(0.9031);transform-origin:0 0;">Notes</div>
<div class="t" style="left:418.30px;top:336.80px;font-size:14px;color:#4a4f54;transform:scaleX(0.9187);transform-origin:0 0;">History</div>
<div class="t" style="left:472.30px;top:336.80px;font-size:14px;color:#4a4f54;transform:scaleX(0.9052);transform-origin:0 0;">Permissions</div>
<div class="t" style="left:191.60px;top:385.90px;font-size:14px;color:#4d5257;transform:scaleX(0.9112);transform-origin:0 0;">Title</div>
<div class="a" style="left:298px;top:377px;width:297px;height:31px;border:1px solid #dee2e6;border-radius:4px;"></div>
<div class="t" style="left:309.50px;top:385.70px;font-size:14px;color:#50565b;transform:scaleX(0.9076);transform-origin:0 0;">sample-report</div>
<div class="t" style="left:191.60px;top:425.30px;font-size:14px;color:#4d5257;transform:scaleX(0.8774);transform-origin:0 0;">Archive serial</div>
<div class="t" style="left:191.60px;top:443.80px;font-size:14px;color:#4d5257;transform:scaleX(0.9566);transform-origin:0 0;">number</div>
<div class="a" style="left:298px;top:423px;width:297px;height:34px;border:1px solid #dee2e6;border-radius:4px;"></div>
<div class="a" style="left:556px;top:423px;width:1px;height:34px;background:#dee2e6;"></div>
<div class="t" style="left:567.30px;top:432.42px;font-size:14.8px;color:#6c757d;transform:scaleX(0.7883);transform-origin:0 0;">+1</div>
<div class="t" style="left:191.50px;top:486.20px;font-size:14px;color:#4d5257;transform:scaleX(0.8796);transform-origin:0 0;">Date created</div>
<div class="a" style="left:298px;top:475px;width:297px;height:34px;border:1px solid #dee2e6;border-radius:4px;"></div>
<div class="a" style="left:515px;top:475px;width:1px;height:34px;background:#dee2e6;"></div>
<div class="a" style="left:554.8px;top:475px;width:1px;height:34px;background:#dee2e6;"></div>
<div class="t" style="left:309.10px;top:486.20px;font-size:14px;color:#50565b;transform:scaleX(0.9678);transform-origin:0 0;">22/11/2025</div>
<svg style="left:527px;top:485.5px" width="18" height="17" viewBox="0 0 18 17"><rect x="0.7" y="1.2" width="16.6" height="15" rx="2" fill="none" stroke="#6c757d" stroke-width="1.3"/><path d="M0.7 3.4 Q0.7 1.2 2.7 1.2 H15.3 Q17.3 1.2 17.3 3.4 V5 H0.7 Z M3.5 0 V2 M14.5 0 V2" fill="#6c757d" stroke="#6c757d" stroke-width="1"/></svg>
<svg style="left:569px;top:489.0px" width="12" height="7" viewBox="0 0 12 7"><path d="M0.3 0.6 H11.7 M2.3 3.5 H9.7 M4.3 6.4 H7.7" stroke="#6c757d" stroke-width="1.1"/></svg>
<div class="t" style="left:191.50px;top:535.10px;font-size:14px;color:#4d5257;transform:scaleX(0.8811);transform-origin:0 0;">Correspondent</div>
<div class="a" style="left:298px;top:524px;width:295.5px;height:34px;border:1px solid #dee2e6;border-radius:4px;"></div>
<div class="a" style="left:513px;top:524px;width:1px;height:34px;background:#dee2e6;"></div>
<div class="a" style="left:553px;top:524px;width:1px;height:34px;background:#dee2e6;"></div>
<svg style="left:495.8px;top:540px" width="8" height="4.5" viewBox="0 0 8 4.5"><path d="M0 0 H8 L4 4.3 Z" fill="#999"/></svg>
<svg style="left:529.2px;top:537.8px" width="9" height="9" viewBox="0 0 9 9"><path d="M4.5 0 V9 M0 4.5 H9" stroke="#5c636a" stroke-width="1.05"/></svg>
<svg style="left:567px;top:538.0px" width="12" height="7" viewBox="0 0 12 7"><path d="M0.3 0.6 H11.7 M2.3 3.5 H9.7 M4.3 6.4 H7.7" stroke="#8d949a" stroke-width="1.1"/></svg>
<div class="t" style="left:191.50px;top:575.00px;font-size:14px;color:#4d5257;transform:scaleX(0.8929);transform-origin:0 0;">Document</div>
<div class="a" style="left:298px;top:572.5px;width:295.5px;height:34px;border:1px solid #dee2e6;border-radius:4px;"></div>
<div class="a" style="left:513px;top:572.5px;width:1px;height:34px;background:#dee2e6;"></div>
<div class="a" style="left:553px;top:572.5px;width:1px;height:34px;background:#dee2e6;"></div>
<svg style="left:495.8px;top:588.5px" width="8" height="4.5" viewBox="0 0 8 4.5"><path d="M0 0 H8 L4 4.3 Z" fill="#999"/></svg>
<svg style="left:529.2px;top:586.3px" width="9" height="9" viewBox="0 0 9 9"><path d="M4.5 0 V9 M0 4.5 H9" stroke="#5c636a" stroke-width="1.05"/></svg>
<svg style="left:567px;top:586.5px" width="12" height="7" viewBox="0 0 12 7"><path d="M0.3 0.6 H11.7 M2.3 3.5 H9.7 M4.3 6.4 H7.7" stroke="#8d949a" stroke-width="1.1"/></svg>
<div class="t" style="left:191.50px;top:635.10px;font-size:14px;color:#4d5257;transform:scaleX(0.8896);transform-origin:0 0;">Storage path</div>
<div class="a" style="left:298px;top:625px;width:295.5px;height:34px;border:1px solid #dee2e6;border-radius:4px;"></div>
<div class="a" style="left:513px;top:625px;width:1px;height:34px;background:#dee2e6;"></div>
<div class="a" style="left:553px;top:625px;width:1px;height:34px;background:#dee2e6;"></div>
<svg style="left:495.8px;top:641px" width="8" height="4.5" viewBox="0 0 8 4.5"><path d="M0 0 H8 L4 4.3 Z" fill="#999"/></svg>
<svg style="left:529.2px;top:638.8px" width="9" height="9" viewBox="0 0 9 9"><path d="M4.5 0 V9 M0 4.5 H9" stroke="#5c636a" stroke-width="1.05"/></svg>
<svg style="left:567px;top:639.0px" width="12" height="7" viewBox="0 0 12 7"><path d="M0.3 0.6 H11.7 M2.3 3.5 H9.7 M4.3 6.4 H7.7" stroke="#8d949a" stroke-width="1.1"/></svg>
<div class="t" style="left:191.50px;top:593.50px;font-size:14px;color:#4d5257;transform:scaleX(0.8919);transform-origin:0 0;">type</div>
<div class="t" style="left:308.10px;top:635.10px;font-size:14px;color:#a3a8ad;transform:scaleX(0.8878);transform-origin:0 0;">Default</div>
<div class="t" style="left:191.50px;top:683.70px;font-size:14px;color:#4d5257;transform:scaleX(0.8937);transform-origin:0 0;">Tags</div>
<div class="a" style="left:298.3px;top:676.5px;width:296.5px;height:31px;border:1px solid #dee2e6;border-radius:4px;"></div>
<div class="a" style="left:515px;top:676.5px;width:1px;height:31px;background:#dee2e6;"></div>
<div class="a" style="left:555.3px;top:676.5px;width:1px;height:31px;background:#dee2e6;"></div>
<svg style="left:497.5px;top:690px" width="8" height="4.5" viewBox="0 0 8 4.5"><path d="M0 0 H8 L4 4.3 Z" fill="#999"/></svg>
<svg style="left:531.0px;top:687.5px" width="9" height="9" viewBox="0 0 9 9"><path d="M4.5 0 V9 M0 4.5 H9" stroke="#5c636a" stroke-width="1.05"/></svg>
<svg style="left:569px;top:688.0px" width="12" height="7" viewBox="0 0 12 7"><path d="M0.3 0.6 H11.7 M2.3 3.5 H9.7 M4.3 6.4 H7.7" stroke="#6c757d" stroke-width="1.1"/></svg>
<div class="a" style="left:192.5px;top:721.8px;width:403px;height:1px;background:#dee2e6;"></div>
<div class="a" style="left:414.5px;top:737.2px;width:58px;height:20px;border:1px solid #c4c8cc;border-right:none;border-radius:4px 0 0 0"></div>
<div class="a" style="left:472px;top:737.2px;width:80px;height:20px;border:1px solid #93b597;border-left:1px solid #5d8a62;"></div>
<div class="a" style="left:551px;top:737.2px;width:44px;height:20px;background:#658a6a;border-radius:0 4px 0 0"></div>
<div class="a" style="left:179px;top:668px;width:427px;height:50px;border:8.5px solid #ff0000"></div>
</body></html>
